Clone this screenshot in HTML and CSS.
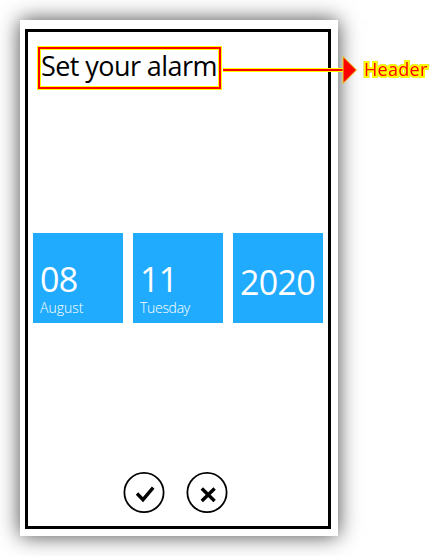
FILE: index.html
```html
<!DOCTYPE html>
<html lang="en">
<head>
<meta charset="utf-8">
<title>Set your alarm</title>
<link rel="stylesheet" href="styles.css">
</head>
<body>
<main class="card">
  <div class="screen">
    <h1 class="title">Set your alarm</h1>
    <div class="tiles">
      <div class="tile"><span class="number">08</span><span class="caption">August</span></div>
      <div class="tile"><span class="number">11</span><span class="caption tuesday">Tuesday</span></div>
      <div class="tile year"><span class="number">2020</span></div>
    </div>
    <div class="actions">
      <svg class="action" viewBox="0 0 42 42"><circle cx="21" cy="20.5" r="19.6"/><path d="M14 21.5L20 27.7L30.2 15.7"/></svg>
      <svg class="action" viewBox="0 0 42 42"><circle cx="21" cy="20.5" r="19.6"/><path d="M15.8 16.5L28.6 29M28.6 16.5L15.8 29"/></svg>
    </div>
  </div>
</main>
<div class="callout">
  <svg class="arrow" viewBox="0 0 136 32"><path class="edge" d="M1 14H121V18H1Z"/><path class="line" d="M1 15H122V17H1Z"/><path class="head" d="M121 2.5V29.5L134.5 16Z"/></svg>
  <span class="label">Header</span>
</div>
</body>
</html>
```
FILE: styles.css
```css
* { box-sizing: border-box; }
body {
  margin: 0;
  padding: 20px;
  width: 438px;
  height: 556px;
  overflow: hidden;
  background: #fff;
  font-family: "Open Sans", "Noto Sans", sans-serif;
}
.card {
  width: 318px;
  height: 516px;
  padding: 9px 7px 7px 5px;
  background: #fff;
  box-shadow: 0 0 20px 0 rgba(0, 0, 0, .72);
}
.screen {
  height: 500px;
  border: 3px solid #000;
  padding: 14px 5px 0;
  display: flex;
  flex-direction: column;
}
.title {
  margin: 0 0 0 4px;
  width: 185px;
  height: 44px;
  border: 1px solid #ff0;
  outline: 2px solid #f00;
  outline-offset: -3px;
  box-shadow: inset 0 0 0 3px #ff0;
  padding: 0 0 0 3px;
  font-size: 27px;
  line-height: 38px;
  font-weight: 400;
  letter-spacing: -.57px;
  white-space: nowrap;
}
.tiles {
  display: grid;
  grid-template-columns: repeat(3, 90px);
  gap: 10px;
  margin-top: 143px;
}
.tile {
  height: 90px;
  padding: 28px 0 0 7px;
  background: #21abff;
  color: #fff;
  display: flex;
  flex-direction: column;
}
.number {
  font-size: 34px;
  line-height: 36px;
  font-weight: 400;
  letter-spacing: -.7px;
}
.caption {
  margin-top: 1px;
  font-size: 14px;
  line-height: 20px;
  font-weight: 300;
}
.tuesday { letter-spacing: -.3px; }
.year { padding-top: 31px; }
.actions {
  display: flex;
  gap: 21px;
  margin: 149px 0 0 90px;
}
.action {
  width: 42px;
  height: 42px;
  fill: none;
  stroke: #000;
  stroke-width: 1.8;
}
.action path { stroke-width: 3.4; }
.callout {
  position: absolute;
  left: 222px;
  top: 54px;
  display: flex;
  align-items: center;
}
.arrow {
  width: 136px;
  height: 32px;
}
.edge { fill: #ff0; }
.line { fill: #f00; }
.head {
  fill: #f00;
  stroke: #e5d51c;
  stroke-width: 1;
}
.label {
  margin: -2px 0 0 6px;
  font-size: 18px;
  letter-spacing: .3px;
  line-height: 30px;
  color: #f00;
  -webkit-text-stroke: 4px #ff0;
  paint-order: stroke fill;
  filter: drop-shadow(0 0 .5px #999);
}
```
